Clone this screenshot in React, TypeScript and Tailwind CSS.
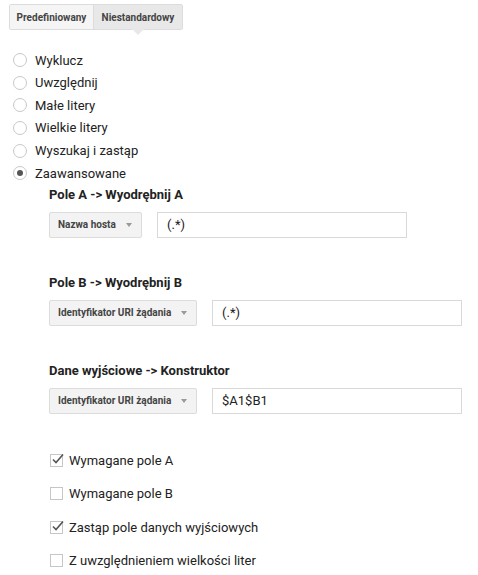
import { useState } from 'react';

const RADIO_OPTIONS = [
  'Wyklucz',
  'Uwzględnij',
  'Małe litery',
  'Wielkie litery',
  'Wyszukaj i zastąp',
  'Zaawansowane',
];

const FIELDS = [
  { title: 'Pole A -> Wyodrębnij A', select: 'Nazwa hosta', value: '(.*)', selectW: 'w-[93px]' },
  { title: 'Pole B -> Wyodrębnij B', select: 'Identyfikator URI żądania', value: '(.*)', selectW: 'w-[148px]' },
  { title: 'Dane wyjściowe -> Konstruktor', select: 'Identyfikator URI żądania', value: '$A1$B1', selectW: 'w-[148px]' },
];

const CHECKS = [
  { label: 'Wymagane pole A', checked: true },
  { label: 'Wymagane pole B', checked: false },
  { label: 'Zastąp pole danych wyjściowych', checked: true },
  { label: 'Z uwzględnieniem wielkości liter', checked: false },
];

function Tabs() {
  return (
    <div className="flex pl-[9px] pt-[4px]">
      <div className="flex h-[26px] border border-[#dcdcdc] rounded-[2px] text-[10px] font-bold text-[#444] whitespace-nowrap">
        <div className="flex items-center w-[84px] justify-center bg-[#f5f5f5] border-r border-[#dcdcdc]">Predefiniowany</div>
        <div className="relative flex items-center w-[88px] justify-center bg-[#e8e8e8]">
          Niestandardowy
          {/* strzałka pod aktywną zakładką */}
          <div className="absolute left-1/2 -translate-x-1/2 top-full w-0 h-0 border-l-[6px] border-r-[6px] border-t-[6px] border-l-transparent border-r-transparent border-t-[#e8e8e8]" />
        </div>
      </div>
    </div>
  );
}

function Radio({ checked }: { checked: boolean }) {
  return (
    <span className="flex items-center justify-center w-[14px] h-[14px] rounded-full border border-[#c8c8c8] bg-white">
      {checked && <span className="w-[6px] h-[6px] rounded-full bg-[#555]" />}
    </span>
  );
}

function Checkbox({ checked }: { checked: boolean }) {
  return (
    <span className="relative w-[13px] h-[13px] border border-[#c6c6c6] bg-white">
      {checked && (
        <svg className="absolute left-[0px] top-[-2px]" width="14" height="13" viewBox="0 0 14 13" fill="none">
          <path d="M2 6.5 L5 9.5 L12 1.5" stroke="#555" strokeWidth="1.6" />
        </svg>
      )}
    </span>
  );
}

export default function App() {
  const [mode, setMode] = useState('Zaawansowane');

  return (
    <div className="w-[478px] h-[575px] bg-white text-[#222] font-['Roboto','Liberation_Sans',sans-serif] text-[13px]">
      <Tabs />

      {/* Opcje */}
      <div className="flex flex-col pl-[13px] pt-[19px]">
        {RADIO_OPTIONS.map(opt => (
          <label key={opt} className="flex items-center gap-[8px] h-[22.6px] cursor-pointer" onClick={() => setMode(opt)}>
            <Radio checked={mode === opt} />
            <span>{opt}</span>
          </label>
        ))}
      </div>

      {/* Pola zaawansowane */}
      <div className="flex flex-col pl-[49px] pt-[1px]">
        {FIELDS.map((f, i) => (
          <div key={i} className={i > 0 ? 'mt-[36px]' : ''}>
            <div className="font-bold h-[18px] leading-[18px]">{f.title}</div>
            <div className="flex items-center gap-[15px] mt-[8px]">
              <div className={`flex items-center justify-between h-[26px] ${f.selectW} pl-[8px] pr-[9px] bg-[#f3f3f3] border border-[#dcdcdc] rounded-[2px] text-[10px] font-bold text-[#444] whitespace-nowrap`}>
                <span>{f.select}</span>
                <span className="w-0 h-0 border-l-[3.5px] border-r-[3.5px] border-t-[4px] border-l-transparent border-r-transparent border-t-[#999]" />
              </div>
              <div className="flex items-center h-[26px] w-[250px] px-[9px] border border-[#d9d9d9] text-[13px]">
                {f.value}
              </div>
            </div>
          </div>
        ))}
      </div>

      {/* Pola wyboru */}
      <div className="flex flex-col pl-[50px] pt-[30px]">
        {CHECKS.map(c => (
          <div key={c.label} className="flex items-center gap-[6px] h-[33.5px]">
            <Checkbox checked={c.checked} />
            <span>{c.label}</span>
          </div>
        ))}
      </div>
    </div>
  );
}
